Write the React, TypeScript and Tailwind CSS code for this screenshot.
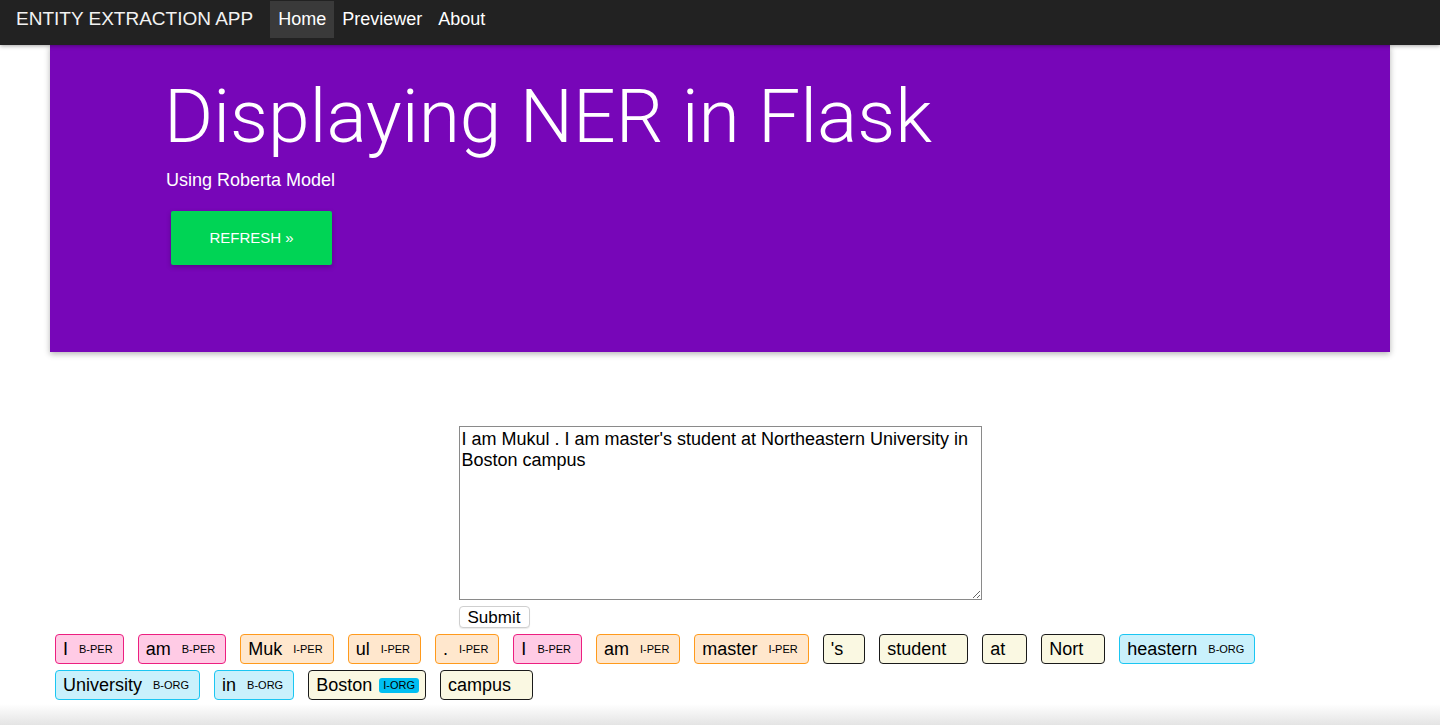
import React from "react";

type Tok = { word: string; tag: string };

const row: Tok[] = [
  { word: "I", tag: "B-PER" },
  { word: "am", tag: "B-PER" },
  { word: "Muk", tag: "I-PER" },
  { word: "ul", tag: "I-PER" },
  { word: ".", tag: "I-PER" },
  { word: "I", tag: "B-PER" },
  { word: "am", tag: "I-PER" },
  { word: "master", tag: "I-PER" },
  { word: "'s", tag: "" },
  { word: "student", tag: "" },
  { word: "at", tag: "" },
  { word: "Nort", tag: "" },
  { word: "heastern", tag: "B-ORG" },
  { word: "University", tag: "B-ORG" },
  { word: "in", tag: "B-ORG" },
  { word: "Boston", tag: "I-ORG" },
  { word: "campus", tag: "" },
];

function tagStyle(tag: string) {
  if (tag === "B-PER") return { box: "bg-[#ffcbe5] border-[#ec1f80]", label: "" };
  if (tag === "I-PER") return { box: "bg-[#ffe7cd] border-[#ff9a1c]", label: "" };
  if (tag === "B-ORG") return { box: "bg-[#c9f1fc] border-[#1ac6f2]", label: "" };
  if (tag === "I-ORG") return { box: "bg-[#faf8e2] border-[#1a1a1a]", label: "bg-[#00bff2] rounded-[3px]" };
  return { box: "bg-[#faf8e2] border-[#1a1a1a]", label: "" };
}

function Token({ t }: { t: Tok }) {
  const s = tagStyle(t.tag);
  return (
    <mark className={`h-[30px] flex items-center border rounded-[4px] pl-[7px] pr-[6px] text-black ${s.box}`}>
      <span className="text-[18px] leading-none">{t.word}</span>
      <span className={`ml-[7px] px-[4px] h-[15px] flex items-center text-[11px] leading-none ${s.label}`}>{t.tag}</span>
    </mark>
  );
}

function Navbar() {
  return (
    <header className="relative z-10 h-[45px] bg-[#222222] shadow-[0_1px_4px_rgba(0,0,0,0.35)] flex items-start pt-[1px]">
      <div className="pl-[16px] h-[37px] flex items-center text-[19px] text-[#f2f2f2]">ENTITY EXTRACTION APP</div>
      <nav className="ml-[17px] flex text-[18px] text-white">
        <a className="h-[37px] px-[8px] flex items-center bg-[#3a3a3a]">Home</a>
        <a className="h-[37px] px-[8px] flex items-center">Previewer</a>
        <a className="h-[37px] px-[8px] flex items-center">About</a>
      </nav>
    </header>
  );
}

export default function App() {
  return (
    <div className="min-h-[725px] bg-white font-['Liberation_Sans',Arial,sans-serif] flex flex-col">
      <Navbar />

      {/* jumbotron */}
      <section className="mx-[50px] bg-[#7706b8] shadow-[0_2px_6px_rgba(0,0,0,0.3)] pt-[30px] pb-[87px] pl-[116px] text-white">
        <h1 className="font-['Roboto',sans-serif] font-light text-[75px] leading-[82px] -ml-[2px]">Displaying NER in Flask</h1>
        <p className="mt-[13px] text-[18px] leading-[20px]">Using Roberta Model</p>
        <button className="mt-[21px] ml-[5px] w-[161px] h-[54px] bg-[#00d455] rounded-[2px] shadow-[0_2px_5px_rgba(0,0,0,0.25)] text-[15px] text-white">
          REFRESH »
        </button>
      </section>

      <form className="mt-[74px] mx-auto w-[523px] flex flex-col items-start">
        <textarea
          className="w-[523px] h-[174px] border border-[#8a8a8a] p-[2px] text-[18px] leading-[21px] text-black resize-y"
          defaultValue="I am Mukul . I am master's student at Northeastern University in Boston campus"
        />
        <button type="button" className="mt-[6px] h-[22px] w-[71px] border border-[#cfcfcf] rounded-[4px] bg-white text-[17px] leading-none text-black shadow-[0_1px_1px_rgba(0,0,0,0.08)]">
          Submit
        </button>
      </form>

      <div className="mt-[6px] px-[55px] flex flex-wrap gap-x-[14px] gap-y-[6px]">
        {row.map((t, i) => (
          <Token key={i} t={t} />
        ))}
      </div>

      <div className="flex-1 mt-[4px] min-h-[21px] bg-gradient-to-b from-white to-[#e4e4e4]" />
    </div>
  );
}
